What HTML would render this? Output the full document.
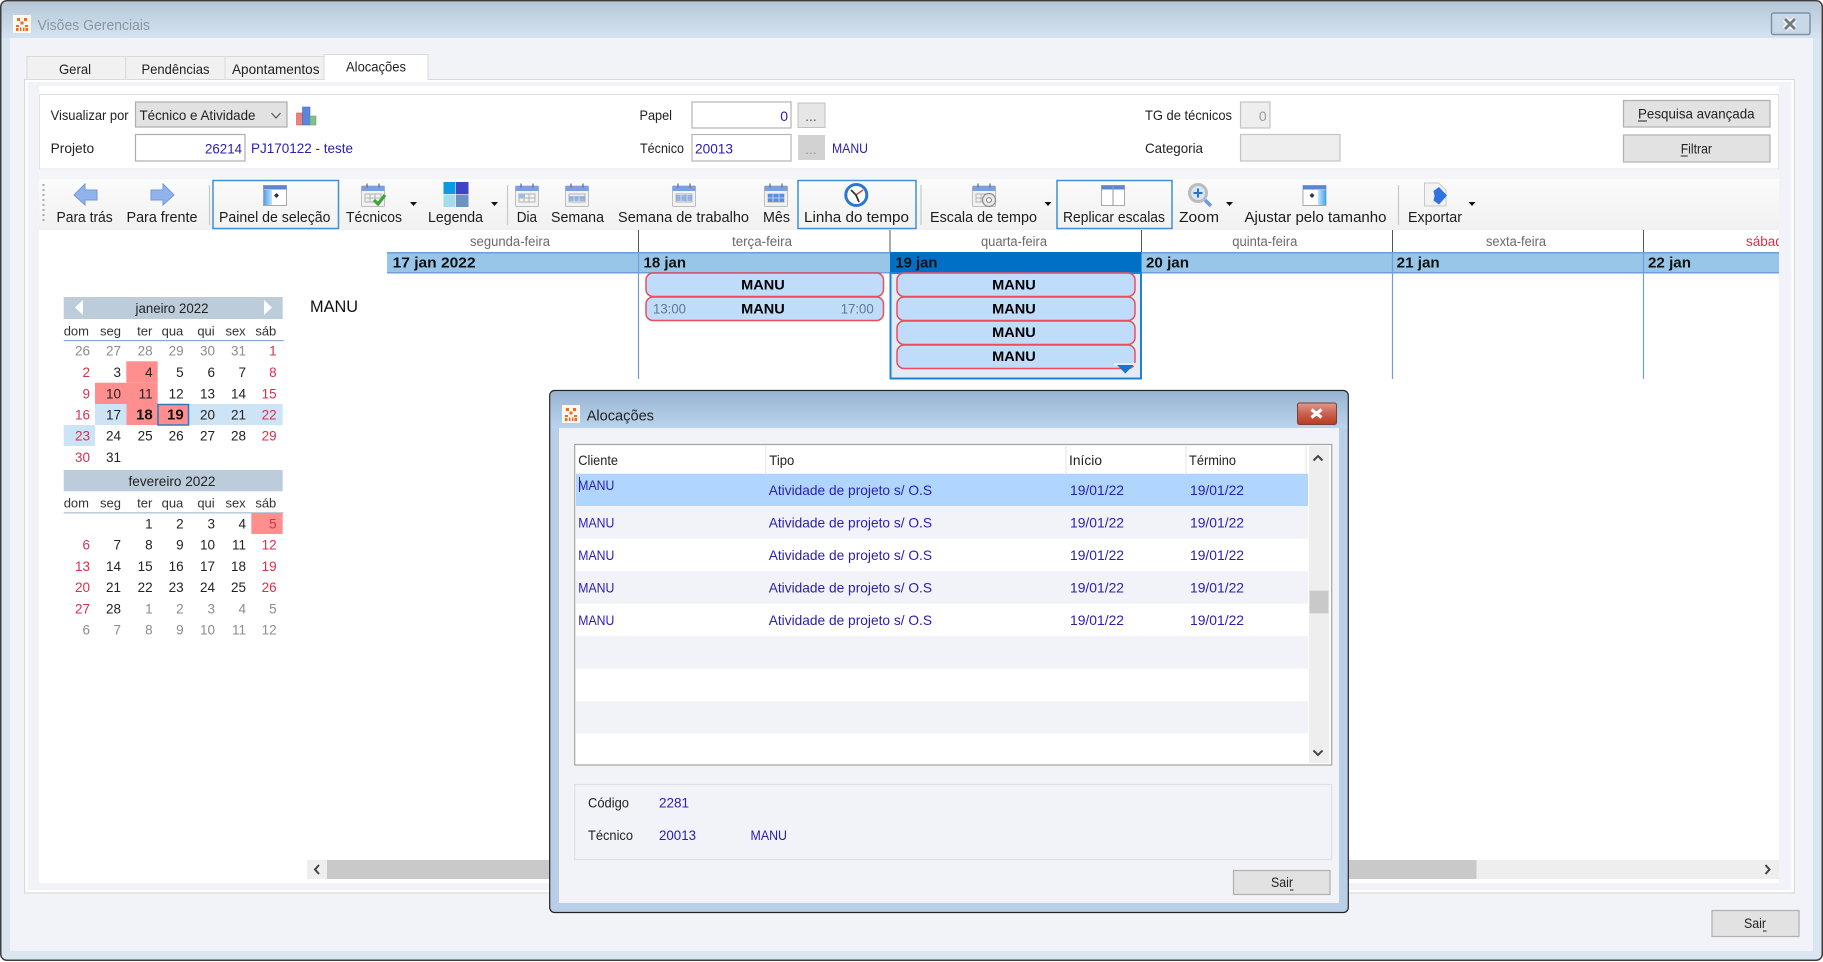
<!DOCTYPE html>
<html lang="pt"><head><meta charset="utf-8"><title>Visões Gerenciais</title>
<style>
html,body{margin:0;padding:0;background:#fff;width:1823px;height:962px;overflow:hidden}
body>svg{display:block;filter:blur(.35px)}
text{font-family:"Liberation Sans",sans-serif;font-size:14px;fill:#222}
.b{fill:#2a20b0}
.d{font-size:13.5px;text-anchor:end;fill:#222}
.g{fill:#8c8c8c}.r{fill:#d8304c}
.w{font-size:13px;text-anchor:end;fill:#333}
.h{font-size:13.5px;fill:#6a6a6a;text-anchor:middle}
.e{font-weight:bold;text-anchor:middle;fill:#000}
.j{font-weight:bold;font-size:15px;fill:#111}
.tb{font-size:14.5px;fill:#1c1c1c}
</style></head><body>
<svg width="1823" height="962" viewBox="0 0 1823 962" xmlns="http://www.w3.org/2000/svg">
<defs>
<clipPath id="sab"><rect x="1700" y="230" width="79" height="22"/></clipPath>
<linearGradient id="wt" x1="0" y1="0" x2="0" y2="40" gradientUnits="userSpaceOnUse"><stop offset="0" stop-color="#b3c6d6"/><stop offset="1" stop-color="#d7e5f3"/></linearGradient>
<linearGradient id="dt" x1="0" y1="390" x2="0" y2="428" gradientUnits="userSpaceOnUse"><stop offset="0" stop-color="#98b3cf"/><stop offset="1" stop-color="#bad4ee"/></linearGradient>
<linearGradient id="tbg" x1="0" y1="0" x2="0" y2="1"><stop offset="0" stop-color="#fbfbfb"/><stop offset="1" stop-color="#f1f1f1"/></linearGradient>
<linearGradient id="cl" x1="0" y1="0" x2="0" y2="1"><stop offset="0" stop-color="#dd9b90"/><stop offset=".5" stop-color="#c9614e"/><stop offset="1" stop-color="#b93c22"/></linearGradient>
<linearGradient id="pane" x1="0" y1="0" x2="1" y2="0"><stop offset="0" stop-color="#4aa3ee"/><stop offset="1" stop-color="#c5e4fb"/></linearGradient>
<linearGradient id="pane2" x1="0" y1="0" x2="1" y2="0"><stop offset="0" stop-color="#c5e4fb"/><stop offset="1" stop-color="#3fa4f0"/></linearGradient>
<symbol id="logo" viewBox="0 0 18 18" overflow="visible"><rect width="18" height="18" fill="#fdf7f2"/><path d="M4 3h3v3H4zM11 3h3v3h-3zM7.500 6.500h3v3h-3zM3 10h3v2H3zM12 10h3v2h-3zM3 13h2.500v3H3zM7 12.500h1.500V16H7zM10 12.500h1.500V16H10zM12.500 13H15v3h-2.500z" fill="#ef6a1e"/></symbol>
<symbol id="cal" viewBox="0 0 24 24" overflow="visible"><rect x=".5" y="3" width="23" height="20.500" rx="1" fill="#f2f2f2" stroke="#bdbdbd"/><rect x=".5" y="3" width="23" height="5" fill="#7d9fde"/><path d="M6 0.500v4M18 0.500v4" stroke="#666" stroke-width="1.200"/><path d="M4 11h16v8H4zM4 15h16M9 11v8M14 11v8" fill="none" stroke="#b3b3b3"/></symbol>
<symbol id="win" viewBox="0 0 24 21" overflow="visible"><rect x=".5" y=".5" width="23" height="20" fill="#fff" stroke="#a8a8a8"/><rect x=".5" y=".5" width="23" height="4" fill="#5b86d0"/></symbol>
</defs>

<!-- main window -->
<rect x=".75" y=".75" width="1821.500" height="959.500" rx="6" fill="#d9e6f2" stroke="#3d3d3d" stroke-width="1.500"/>
<path d="M1.500 38V7a5 5 0 0 1 5-5H1816a5 5 0 0 1 5 5V38z" fill="url(#wt)"/>
<rect x="10" y="38" width="1803" height="913" fill="#f1f3f8"/>
<use href="#logo" x="13" y="15" width="18" height="18"/>
<text x="37.500" y="30" textLength="112.500" lengthAdjust="spacingAndGlyphs" style="font-size:15px;fill:#8b96a1">Visões Gerenciais</text>
<rect x="1771.500" y="13" width="38.500" height="21.500" rx="2" fill="#c9d8e6" stroke="#7f93a8" stroke-width="1.500"/>
<path d="M1785 19l10 10M1795 19l-10 10" stroke="#fff" stroke-width="5.500"/><path d="M1785 19l10 10M1795 19l-10 10" stroke="#6f7a85" stroke-width="2.800"/>

<!-- tabs -->
<rect x="24.500" y="79.500" width="1770" height="813.500" fill="#f1f3f8" stroke="#dadada"/>
<rect x="26.500" y="81" width="1766" height="810" fill="none" stroke="#fff" stroke-width="2"/>
<rect x="27" y="56.500" width="98.700" height="23" fill="#f1f1f1" stroke="#dadada"/>
<rect x="125.700" y="56.500" width="99.300" height="23" fill="#f1f1f1" stroke="#dadada"/>
<rect x="225" y="56.500" width="99" height="23" fill="#f1f1f1" stroke="#dadada"/>
<path d="M324 80V54.500H428V80" fill="#fff" stroke="#dadada"/><rect x="325" y="78" width="102" height="4" fill="#fff"/>
<text x="59" y="74" textLength="32" lengthAdjust="spacingAndGlyphs">Geral</text>
<text x="141.500" y="74" textLength="68" lengthAdjust="spacingAndGlyphs">Pendências</text>
<text x="232" y="74" textLength="87.500" lengthAdjust="spacingAndGlyphs">Apontamentos</text>
<text x="346" y="71.500" textLength="60" lengthAdjust="spacingAndGlyphs">Alocações</text>

<!-- content -->
<rect x="39" y="86" width="1740" height="797" fill="#fff"/>
<rect x="39.500" y="94.500" width="1739" height="74.500" fill="#fff" stroke="#e2e2e2"/>
<rect x="39" y="170" width="1740" height="9" fill="#f3f5f9"/>
<text x="50.600" y="120" textLength="78" lengthAdjust="spacingAndGlyphs">Visualizar por</text>
<rect x="135.500" y="102" width="151.500" height="25" fill="#e2e2e2" stroke="#adadad" stroke-width="1.200"/>
<text x="139.500" y="120" textLength="116" lengthAdjust="spacingAndGlyphs">Técnico e Atividade</text>
<path d="M271.500 113l4.500 5 4.500-5" fill="none" stroke="#555" stroke-width="1.200"/>
<rect x="296.500" y="113" width="6" height="12" fill="#e8827f" stroke="#d85a58" stroke-width=".6"/><rect x="302.500" y="107" width="7.500" height="18" fill="#5c86dc" stroke="#3b6fd2" stroke-width=".6"/><rect x="310" y="116" width="6" height="9" fill="#86bd8c" stroke="#62ad6a" stroke-width=".6"/>
<text x="50.600" y="153" textLength="43.500" lengthAdjust="spacingAndGlyphs">Projeto</text>
<rect x="135.500" y="134.500" width="109.500" height="26.500" fill="#fff" stroke="#adadad" stroke-width="1.200"/>
<text x="205" y="153.500" textLength="37" lengthAdjust="spacingAndGlyphs" class="b">26214</text>
<text x="251" y="153" textLength="102" lengthAdjust="spacingAndGlyphs" class="b">PJ170122 - teste</text>

<text x="639.500" y="120" textLength="32.500" lengthAdjust="spacingAndGlyphs">Papel</text>
<rect x="692" y="102" width="99" height="26" fill="#fff" stroke="#b5b5b5" stroke-width="1.200"/>
<text x="788" y="121" text-anchor="end" class="b">0</text>
<rect x="798" y="103" width="27" height="24.500" fill="#e6e6e6" stroke="#c0c0c0"/>
<text x="811" y="121" text-anchor="middle" style="fill:#555">...</text>
<text x="640" y="153" textLength="44" lengthAdjust="spacingAndGlyphs">Técnico</text>
<rect x="692" y="134.500" width="99" height="26.500" fill="#fff" stroke="#b5b5b5" stroke-width="1.200"/>
<text x="695" y="153.500" textLength="38" lengthAdjust="spacingAndGlyphs" class="b">20013</text>
<rect x="798" y="135" width="27" height="25" fill="#d2d2d2"/>
<text x="811" y="154" text-anchor="middle" style="fill:#999">...</text>
<text x="832" y="153" textLength="36" lengthAdjust="spacingAndGlyphs" class="b">MANU</text>

<text x="1145" y="120" textLength="87" lengthAdjust="spacingAndGlyphs">TG de técnicos</text>
<rect x="1240.500" y="102" width="29.500" height="26" fill="#eee" stroke="#c4c4c4" stroke-width="1.200"/>
<text x="1266.700" y="121" text-anchor="end" style="fill:#999">0</text>
<text x="1145" y="153" textLength="58" lengthAdjust="spacingAndGlyphs">Categoria</text>
<rect x="1240.500" y="134.500" width="99.500" height="26.500" fill="#eee" stroke="#c4c4c4" stroke-width="1.200"/>
<rect x="1623.500" y="100.500" width="146.500" height="26.500" fill="#e2e2e2" stroke="#b0b0b0" stroke-width="1.200"/>
<text x="1638" y="118.500" textLength="116.600" lengthAdjust="spacingAndGlyphs">Pesquisa avançada</text><rect x="1638" y="120.500" width="9" height="1" fill="#222"/>
<rect x="1623.500" y="135" width="146.500" height="27" fill="#e2e2e2" stroke="#b0b0b0" stroke-width="1.200"/>
<text x="1680.700" y="153.500" textLength="31.300" lengthAdjust="spacingAndGlyphs">Filtrar</text><rect x="1680.700" y="155.500" width="7" height="1" fill="#222"/>

<!-- toolbar -->
<rect x="39" y="179" width="1740" height="51" fill="url(#tbg)"/>
<path d="M43.500 184v38" stroke="#a8a8a8" stroke-width="2" stroke-dasharray="2 3"/>
<path d="M209.500 185v40M507.500 185v40M921 185v40M1398.500 185v40" stroke="#c8c8c8" stroke-width="1.200"/>
<path d="M74 195l11-11v6h12v10H85v5z" fill="#8fb3ea" stroke="#7099d8"/>
<path d="M174 195l-11-11v6h-12v10h12v5z" fill="#8fb3ea" stroke="#7099d8"/>
<g fill="none" stroke="#3f90d8" stroke-width="1.500"><rect x="213" y="180.500" width="125.500" height="48"/><rect x="798" y="180.500" width="118" height="48"/><rect x="1057" y="180.500" width="115" height="48"/></g>
<use href="#win" x="263" y="185" width="24" height="21"/><rect x="264" y="190" width="8" height="15" fill="url(#pane)"/><path d="M275 193l2.500 2.500-2.500 2.500-2.500-2.500z" transform="translate(1.500 0)" fill="#333"/>
<use href="#cal" x="361" y="183" width="24" height="24"/><path d="M374 200l4 4 7-9" fill="none" stroke="#3fa43d" stroke-width="3.200"/>
<rect x="443.500" y="182" width="12" height="12" fill="#0a9be2"/><rect x="456" y="182" width="12.500" height="12" fill="#3e45c4"/><rect x="443.500" y="194.500" width="12" height="12.500" fill="#a6dcea"/><rect x="456" y="194.500" width="12.500" height="12.500" fill="#6d92c0"/>
<use href="#cal" x="515" y="183" width="24" height="24"/><rect x="519" y="194" width="6" height="4" fill="#9dbcea"/>
<use href="#cal" x="565" y="183" width="24" height="24"/><rect x="569" y="196" width="16" height="5" fill="#7fa6e0" opacity=".8"/><path d="M574 194v8M579 194v8" stroke="#dbe6f7" stroke-width=".8"/>
<use href="#cal" x="672" y="183" width="24" height="24"/><rect x="676" y="195" width="16" height="6" fill="#7fa6e0" opacity=".8"/><path d="M681 194v8M687 194v8" stroke="#dbe6f7" stroke-width=".8"/>
<use href="#cal" x="764" y="183" width="24" height="24"/><rect x="768" y="194" width="16" height="8" fill="#5f8ede"/><path d="M768 198h16M773 194v8M779 194v8" stroke="#d0def5" stroke-width=".8"/>
<circle cx="856.300" cy="195" r="10.500" fill="#fff" stroke="#2a78d4" stroke-width="3"/><path d="M856 195l7-5" stroke="#c54a3c" stroke-width="1.400"/><path d="M851 190l5 5 3 7" fill="none" stroke="#333" stroke-width="1.800"/>
<use href="#cal" x="972" y="183" width="24" height="24"/><circle cx="989" cy="200" r="6.500" fill="#e9e9e9" stroke="#8b8b8b" stroke-width="1.200"/><circle cx="989" cy="200" r="2.400" fill="#fff" stroke="#777"/>
<use href="#win" x="1101" y="185" width="24" height="21"/><path d="M1113 185v21" stroke="#999"/>
<circle cx="1198" cy="193" r="8.500" fill="#d5e8f8" stroke="#bcbcbc" stroke-width="3"/><path d="M1193.500 193h9M1198 188.500v9" stroke="#2f6fd0" stroke-width="2"/><path d="M1205 200l6 6" stroke="#6e9ad8" stroke-width="3.600"/>
<use href="#win" x="1302.500" y="185" width="24" height="21"/><rect x="1318" y="190" width="8" height="15" fill="url(#pane2)"/><path d="M1312 193l2.500 2.500-2.500 2.500-2.500-2.500z" fill="#333"/>
<path d="M1424.500 183h14l7.500 7v16h-21.500z" fill="#f3f3f3" stroke="#c8c8c8"/><path d="M1439 187l8 8.500-8 9-5.500-4 1-4.500-1-5z" fill="#2f74dc"/>
<g fill="#111"><path d="M410 202h7l-3.500 4z"/><path d="M491 202h7l-3.500 4z"/><path d="M1044.500 202h7l-3.500 4z"/><path d="M1226 202h7l-3.500 4z"/><path d="M1468.500 202h7l-3.500 4z"/></g>
<g>
<text class="tb" x="56.500" y="222" textLength="56.200" lengthAdjust="spacingAndGlyphs">Para trás</text>
<text class="tb" x="126.500" y="222" textLength="71" lengthAdjust="spacingAndGlyphs">Para frente</text>
<text class="tb" x="219" y="222" textLength="111.500" lengthAdjust="spacingAndGlyphs">Painel de seleção</text>
<text class="tb" x="346" y="222" textLength="56" lengthAdjust="spacingAndGlyphs">Técnicos</text>
<text class="tb" x="428" y="222" textLength="55" lengthAdjust="spacingAndGlyphs">Legenda</text>
<text class="tb" x="516.700" y="222" textLength="20.300" lengthAdjust="spacingAndGlyphs">Dia</text>
<text class="tb" x="551" y="222" textLength="53" lengthAdjust="spacingAndGlyphs">Semana</text>
<text class="tb" x="618" y="222" textLength="131" lengthAdjust="spacingAndGlyphs">Semana de trabalho</text>
<text class="tb" x="763" y="222" textLength="27" lengthAdjust="spacingAndGlyphs">Mês</text>
<text class="tb" x="804" y="222" textLength="105" lengthAdjust="spacingAndGlyphs">Linha do tempo</text>
<text class="tb" x="930" y="222" textLength="107" lengthAdjust="spacingAndGlyphs">Escala de tempo</text>
<text class="tb" x="1063" y="222" textLength="102" lengthAdjust="spacingAndGlyphs">Replicar escalas</text>
<text class="tb" x="1179" y="222" textLength="40" lengthAdjust="spacingAndGlyphs">Zoom</text>
<text class="tb" x="1244.500" y="222" textLength="142" lengthAdjust="spacingAndGlyphs">Ajustar pelo tamanho</text>
<text class="tb" x="1408" y="222" textLength="54" lengthAdjust="spacingAndGlyphs">Exportar</text>
</g>

<!-- schedule -->
<path d="M638.500 230v22M890 230v22M1141.500 230v22M1392.500 230v22M1643.500 230v22" stroke="#555"/>
<text class="h" x="510" y="246" textLength="80" lengthAdjust="spacingAndGlyphs">segunda-feira</text>
<text class="h" x="762" y="246" textLength="60" lengthAdjust="spacingAndGlyphs">terça-feira</text>
<text class="h" x="1014" y="246" textLength="66" lengthAdjust="spacingAndGlyphs">quarta-feira</text>
<text class="h" x="1264.800" y="246" textLength="65" lengthAdjust="spacingAndGlyphs">quinta-feira</text>
<text class="h" x="1516" y="246" textLength="60" lengthAdjust="spacingAndGlyphs">sexta-feira</text>
<g clip-path="url(#sab)"><text x="1746" y="246" style="font-size:13.500px;fill:#d8304c">sábado</text></g>
<rect x="387" y="252" width="1392" height="21.500" fill="#98c6e8"/>
<path d="M387 252.700H1779M387 272.800H1779" stroke="#6f9fd6" stroke-width="1.500"/>
<rect x="890" y="252" width="251.500" height="21.500" fill="#0070c6"/>
<path d="M638.500 252v127M1392.500 252v127M1643.500 252v127" stroke="#6f9fd6" stroke-width="1.200"/>
<rect x="890.500" y="273" width="250.500" height="105.500" fill="#e5ebf6" stroke="#1e82d2" stroke-width="2"/>
<text class="j" x="392.600" y="267.500" textLength="83" lengthAdjust="spacingAndGlyphs">17 jan 2022</text>
<text class="j" x="643.500" y="267.500" textLength="42.500" lengthAdjust="spacingAndGlyphs">18 jan</text>
<text class="j" x="895.400" y="267.500" textLength="42" lengthAdjust="spacingAndGlyphs">19 jan</text>
<text class="j" x="1146" y="267.500" textLength="43" lengthAdjust="spacingAndGlyphs">20 jan</text>
<text class="j" x="1396.700" y="267.500" textLength="43" lengthAdjust="spacingAndGlyphs">21 jan</text>
<text class="j" x="1648" y="267.500" textLength="43" lengthAdjust="spacingAndGlyphs">22 jan</text>
<g fill="#bfdcfb" stroke="#ee4c5c" stroke-width="1.500">
<rect x="646" y="273" width="237.500" height="23.500" rx="7"/><rect x="646" y="297" width="237.500" height="23.500" rx="7"/>
<rect x="897" y="273" width="238" height="23.500" rx="7"/><rect x="897" y="297" width="238" height="23.500" rx="7"/><rect x="897" y="321" width="238" height="23.500" rx="7"/><rect x="897" y="345" width="238" height="23.500" rx="7"/>
</g>
<rect x="1114" y="363" width="22" height="3" fill="#e5ebf6"/>
<path d="M1117 365h16.600l-8.300 8.500z" fill="#1576cf"/>
<g>
<text class="e" x="763" y="289.500" textLength="43.600" lengthAdjust="spacingAndGlyphs">MANU</text>
<text class="e" x="763" y="313.500" textLength="43.600" lengthAdjust="spacingAndGlyphs">MANU</text>
<text class="e" x="1014" y="289.500" textLength="43.600" lengthAdjust="spacingAndGlyphs">MANU</text>
<text class="e" x="1014" y="313.500" textLength="43.600" lengthAdjust="spacingAndGlyphs">MANU</text>
<text class="e" x="1014" y="337" textLength="43.600" lengthAdjust="spacingAndGlyphs">MANU</text>
<text class="e" x="1014" y="361" textLength="43.600" lengthAdjust="spacingAndGlyphs">MANU</text>
</g>
<text x="653" y="313.500" textLength="33" lengthAdjust="spacingAndGlyphs" style="fill:#64788f">13:00</text>
<text x="840.700" y="313.500" textLength="33" lengthAdjust="spacingAndGlyphs" style="fill:#64788f">17:00</text>
<text x="310" y="312" textLength="48" lengthAdjust="spacingAndGlyphs" style="font-size:16.500px;fill:#111">MANU</text>

<!-- calendar -->
<rect x="63.700" y="297" width="219" height="22" fill="#bdccda"/>
<path d="M83 300v15l-8-7.500zM264 300v15l8-7.500z" fill="#fff"/>
<text x="172" y="313" text-anchor="middle" textLength="73" lengthAdjust="spacingAndGlyphs">janeiro 2022</text>
<rect x="63.700" y="340" width="220" height="1.200" fill="#8aa8cc"/>
<g fill="#ff8f8f">
<rect x="126.300" y="361.300" width="31.400" height="21.400"/><rect x="95" y="382.700" width="62.700" height="21.300"/><rect x="126.300" y="404" width="31.400" height="21"/>
</g>
<g fill="#cde4f7"><rect x="95" y="404" width="31.300" height="21"/><rect x="189" y="404" width="93.700" height="21"/><rect x="63.700" y="425" width="31.300" height="21"/></g>
<rect x="158" y="404.500" width="30.500" height="20.500" fill="#ff8f8f" stroke="#2a7bc0" stroke-width="1.500"/>
<text class="w" y="335.500"><tspan x="89">dom</tspan><tspan x="121">seg</tspan><tspan x="152.300">ter</tspan><tspan x="183.300">qua</tspan><tspan x="214.700">qui</tspan><tspan x="245.700">sex</tspan><tspan x="276.300">sáb</tspan></text>
<text class="d" y="355.700"><tspan class="g" x="90">26</tspan><tspan class="g" x="121">27</tspan><tspan class="g" x="152.700">28</tspan><tspan class="g" x="183.700">29</tspan><tspan class="g" x="215">30</tspan><tspan class="g" x="246">31</tspan><tspan class="r" x="276.700">1</tspan></text>
<text class="d" y="377"><tspan class="r" x="90">2</tspan><tspan x="121">3</tspan><tspan x="152.700">4</tspan><tspan x="183.700">5</tspan><tspan x="215">6</tspan><tspan x="246">7</tspan><tspan class="r" x="276.700">8</tspan></text>
<text class="d" y="398.300"><tspan class="r" x="90">9</tspan><tspan x="121">10</tspan><tspan x="152.700">11</tspan><tspan x="183.700">12</tspan><tspan x="215">13</tspan><tspan x="246">14</tspan><tspan class="r" x="276.700">15</tspan></text>
<text class="d" y="419.700"><tspan class="r" x="90">16</tspan><tspan x="121">17</tspan><tspan x="152.700" font-weight="bold" style="font-size:15px;fill:#111">18</tspan><tspan x="183.700" font-weight="bold" style="font-size:15px;fill:#111">19</tspan><tspan x="215">20</tspan><tspan x="246">21</tspan><tspan class="r" x="276.700">22</tspan></text>
<text class="d" y="440.700"><tspan class="r" x="90">23</tspan><tspan x="121">24</tspan><tspan x="152.700">25</tspan><tspan x="183.700">26</tspan><tspan x="215">27</tspan><tspan x="246">28</tspan><tspan class="r" x="276.700">29</tspan></text>
<text class="d" y="462"><tspan class="r" x="90">30</tspan><tspan x="121">31</tspan></text>

<rect x="63.700" y="470" width="219" height="21.300" fill="#bdccda"/>
<text x="172" y="486" text-anchor="middle" textLength="87" lengthAdjust="spacingAndGlyphs">fevereiro 2022</text>
<rect x="63.700" y="512" width="220" height="1.600" fill="#bdccda"/>
<rect x="251.300" y="513" width="31.400" height="21" fill="#ff8f8f"/>
<text class="w" y="507.500"><tspan x="89">dom</tspan><tspan x="121">seg</tspan><tspan x="152.300">ter</tspan><tspan x="183.300">qua</tspan><tspan x="214.700">qui</tspan><tspan x="245.700">sex</tspan><tspan x="276.300">sáb</tspan></text>
<text class="d" y="528.700"><tspan x="152.700">1</tspan><tspan x="183.700">2</tspan><tspan x="215">3</tspan><tspan x="246">4</tspan><tspan class="r" x="276.700">5</tspan></text>
<text class="d" y="549.700"><tspan class="r" x="90">6</tspan><tspan x="121">7</tspan><tspan x="152.700">8</tspan><tspan x="183.700">9</tspan><tspan x="215">10</tspan><tspan x="246">11</tspan><tspan class="r" x="276.700">12</tspan></text>
<text class="d" y="571"><tspan class="r" x="90">13</tspan><tspan x="121">14</tspan><tspan x="152.700">15</tspan><tspan x="183.700">16</tspan><tspan x="215">17</tspan><tspan x="246">18</tspan><tspan class="r" x="276.700">19</tspan></text>
<text class="d" y="592"><tspan class="r" x="90">20</tspan><tspan x="121">21</tspan><tspan x="152.700">22</tspan><tspan x="183.700">23</tspan><tspan x="215">24</tspan><tspan x="246">25</tspan><tspan class="r" x="276.700">26</tspan></text>
<text class="d" y="613.300"><tspan class="r" x="90">27</tspan><tspan x="121">28</tspan><tspan class="g" x="152.700">1</tspan><tspan class="g" x="183.700">2</tspan><tspan class="g" x="215">3</tspan><tspan class="g" x="246">4</tspan><tspan class="g" x="276.700">5</tspan></text>
<text class="d" y="634.300"><tspan class="g" x="90">6</tspan><tspan class="g" x="121">7</tspan><tspan class="g" x="152.700">8</tspan><tspan class="g" x="183.700">9</tspan><tspan class="g" x="215">10</tspan><tspan class="g" x="246">11</tspan><tspan class="g" x="276.700">12</tspan></text>

<!-- h scrollbar -->
<rect x="307" y="860" width="1472" height="19" fill="#eee"/>
<rect x="327" y="860" width="1149.500" height="19" fill="#c9c9c9"/>
<path d="M319 865l-4 4.500 4 4.500M1765.500 865l4 4.500-4 4.500" fill="none" stroke="#444" stroke-width="2"/>

<!-- main Sair -->
<rect x="1712" y="910.500" width="87" height="26" fill="#e2e2e2" stroke="#b0b0b0" stroke-width="1.200"/>
<text x="1755" y="928" text-anchor="middle" textLength="22" lengthAdjust="spacingAndGlyphs">Sair</text><rect x="1763" y="930.500" width="3.500" height="1" fill="#222"/>

<!-- dialog -->
<rect x="549.700" y="390.500" width="798.600" height="522" rx="5" fill="#b9cfe8" stroke="#222" stroke-width="1.200"/>
<path d="M550.500 428V395.500a4 4 0 0 1 4-4H1343.500a4 4 0 0 1 4 4V428z" fill="url(#dt)"/>
<rect x="559" y="428" width="780" height="475" fill="#f1f3f8"/>
<use href="#logo" x="562" y="405" width="18" height="18"/>
<text x="586.700" y="420.500" textLength="67.300" lengthAdjust="spacingAndGlyphs" style="font-size:15px">Alocações</text>
<rect x="1297.500" y="403" width="39" height="21.500" rx="2" fill="url(#cl)" stroke="#7b3f36"/>
<path d="M1311.500 409.500l10 8M1321.500 409.500l-10 8" stroke="#fff" stroke-width="3.200"/>

<rect x="574.700" y="444.500" width="757" height="320.500" fill="#fff" stroke="#a4a4a4" stroke-width="1.200"/>
<path d="M765.700 446v27M1066 446v27M1186 446v27M1306 446v27" stroke="#eee" stroke-width="1.500"/>
<rect x="576" y="473.700" width="732" height="32.300" fill="#b0d6ff"/>
<g fill="#f1f3f8"><rect x="576" y="506" width="732" height="32.700"/><rect x="576" y="571" width="732" height="32.700"/><rect x="576" y="636" width="732" height="32.700"/><rect x="576" y="701" width="732" height="32.500"/></g>
<rect x="1309" y="446" width="20.300" height="317" fill="#eee"/>
<rect x="1309.500" y="590.700" width="19" height="22.600" fill="#c9c9c9"/>
<path d="M1313.500 460.500l4.500-4.500 4.500 4.500M1313.500 750.500l4.500 4.500 4.500-4.500" fill="none" stroke="#444" stroke-width="2"/>
<text x="578.300" y="465" textLength="39.700" lengthAdjust="spacingAndGlyphs">Cliente</text>
<text x="769.300" y="465" textLength="25" lengthAdjust="spacingAndGlyphs">Tipo</text>
<text x="1069" y="465" textLength="33" lengthAdjust="spacingAndGlyphs">Início</text>
<text x="1189" y="465" textLength="47" lengthAdjust="spacingAndGlyphs">Término</text>
<rect x="579" y="477" width="1" height="15" fill="#333"/>
<g>
<text class="b" x="578.300" y="490" textLength="36" lengthAdjust="spacingAndGlyphs">MANU</text>
<text class="b" x="578.300" y="527.700" textLength="36" lengthAdjust="spacingAndGlyphs">MANU</text>
<text class="b" x="578.300" y="560" textLength="36" lengthAdjust="spacingAndGlyphs">MANU</text>
<text class="b" x="578.300" y="592.700" textLength="36" lengthAdjust="spacingAndGlyphs">MANU</text>
<text class="b" x="578.300" y="625" textLength="36" lengthAdjust="spacingAndGlyphs">MANU</text>
<text class="b" x="768.700" y="495" textLength="163.300" lengthAdjust="spacingAndGlyphs">Atividade de projeto s/ O.S</text>
<text class="b" x="768.700" y="527.700" textLength="163.300" lengthAdjust="spacingAndGlyphs">Atividade de projeto s/ O.S</text>
<text class="b" x="768.700" y="560" textLength="163.300" lengthAdjust="spacingAndGlyphs">Atividade de projeto s/ O.S</text>
<text class="b" x="768.700" y="592.700" textLength="163.300" lengthAdjust="spacingAndGlyphs">Atividade de projeto s/ O.S</text>
<text class="b" x="768.700" y="625" textLength="163.300" lengthAdjust="spacingAndGlyphs">Atividade de projeto s/ O.S</text>
<text class="b" x="1070" y="495" textLength="54" lengthAdjust="spacingAndGlyphs">19/01/22</text>
<text class="b" x="1070" y="527.700" textLength="54" lengthAdjust="spacingAndGlyphs">19/01/22</text>
<text class="b" x="1070" y="560" textLength="54" lengthAdjust="spacingAndGlyphs">19/01/22</text>
<text class="b" x="1070" y="592.700" textLength="54" lengthAdjust="spacingAndGlyphs">19/01/22</text>
<text class="b" x="1070" y="625" textLength="54" lengthAdjust="spacingAndGlyphs">19/01/22</text>
<text class="b" x="1190" y="495" textLength="54" lengthAdjust="spacingAndGlyphs">19/01/22</text>
<text class="b" x="1190" y="527.700" textLength="54" lengthAdjust="spacingAndGlyphs">19/01/22</text>
<text class="b" x="1190" y="560" textLength="54" lengthAdjust="spacingAndGlyphs">19/01/22</text>
<text class="b" x="1190" y="592.700" textLength="54" lengthAdjust="spacingAndGlyphs">19/01/22</text>
<text class="b" x="1190" y="625" textLength="54" lengthAdjust="spacingAndGlyphs">19/01/22</text>
</g>
<rect x="574.700" y="784.500" width="757" height="75" fill="#f1f3f8" stroke="#dfdfe4" stroke-width="1.200"/>
<text x="588" y="807.700" textLength="41" lengthAdjust="spacingAndGlyphs">Código</text>
<text class="b" x="659" y="807.700" textLength="30" lengthAdjust="spacingAndGlyphs">2281</text>
<text x="588" y="840" textLength="45" lengthAdjust="spacingAndGlyphs">Técnico</text>
<text class="b" x="659" y="840" textLength="37" lengthAdjust="spacingAndGlyphs">20013</text>
<text class="b" x="750.500" y="840" textLength="36.500" lengthAdjust="spacingAndGlyphs">MANU</text>
<rect x="1233.500" y="870.500" width="96.500" height="24" fill="#e2e2e2" stroke="#b0b0b0" stroke-width="1.200"/>
<text x="1282" y="887" text-anchor="middle" textLength="22" lengthAdjust="spacingAndGlyphs">Sair</text><rect x="1290" y="889.500" width="3.500" height="1" fill="#222"/>
</svg>
</body></html>
